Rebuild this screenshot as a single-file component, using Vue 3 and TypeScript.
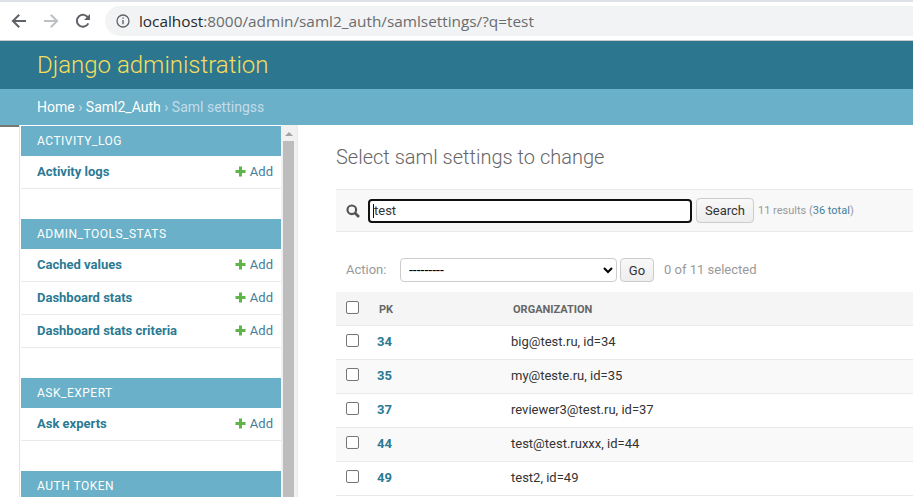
<script setup lang="ts">
interface Model { name: string }
interface Group { title: string; models: Model[] }
const groups: Group[] = [
  { title: 'ACTIVITY_LOG', models: [{ name: 'Activity logs' }] },
  { title: 'ADMIN_TOOLS_STATS', models: [{ name: 'Cached values' }, { name: 'Dashboard stats' }, { name: 'Dashboard stats criteria' }] },
  { title: 'ASK_EXPERT', models: [{ name: 'Ask experts' }] },
  { title: 'AUTH TOKEN', models: [] },
]
const rows = [
  { pk: 34, org: 'big@test.ru, id=34' },
  { pk: 35, org: 'my@teste.ru, id=35' },
  { pk: 37, org: 'reviewer3@test.ru, id=37' },
  { pk: 44, org: 'test@test.ruxxx, id=44' },
  { pk: 49, org: 'test2, id=49' },
]
</script>

<template>
  <div class="page">
    <div class="chrome">
      <div class="nav">
        <svg width="16" height="16" viewBox="0 0 16 16"><path d="M15 8H2.500M8.200 1.700 1.900 8l6.300 6.300" fill="none" stroke="#5f6368" stroke-width="2"/></svg>
        <svg width="16" height="16" viewBox="0 0 16 16"><path d="M1 8h12.500M7.800 1.700 14.100 8l-6.300 6.300" fill="none" stroke="#bdc1c6" stroke-width="2"/></svg>
        <svg width="16" height="16" viewBox="0 0 16 16"><path d="M13.300 10.300A6 6 0 1 1 13.200 5" fill="none" stroke="#5f6368" stroke-width="2"/><path d="M15 1v6H9z" fill="#5f6368"/></svg>
      </div>
      <div class="omni">
        <svg width="14" height="14" viewBox="0 0 14 14"><circle cx="7" cy="7" r="6" fill="none" stroke="#5f6368" stroke-width="1.300"/><path d="M7 6v4.300M7 3.500v1.300" stroke="#5f6368" stroke-width="1.400"/></svg>
        <span class="url"><b>localhost</b>:8000/admin/saml2_auth/samlsettings/?q=test</span>
      </div>
    </div>
    <header class="head"><span class="brand">Django administration</span></header>
    <div class="crumbs"><a>Home</a> › <a>Saml2_Auth</a> › Saml settingss</div>
    <div class="body">
      <div class="strip"></div>
      <aside class="side">
        <div class="side-list">
          <section v-for="g in groups" :key="g.title" class="grp">
            <div class="cap">{{ g.title }}</div>
            <div v-for="m in g.models" :key="m.name" class="mrow">
              <a class="mname">{{ m.name }}</a>
              <span class="add"><svg width="11" height="11" viewBox="0 0 11 11"><path d="M4 0.500h3v3.500h3.500v3H7v3.500H4V7H0.500V4H4z" fill="#5fb44a"/></svg>Add</span>
            </div>
          </section>
        </div>
        <div class="sbar"><div class="sup"></div><div class="thumb"></div></div>
      </aside>
      <main class="main">
        <h1>Select saml settings to change</h1>
        <div class="search">
          <svg class="lens" width="14" height="14" viewBox="0 0 14 14"><circle cx="5.800" cy="5.800" r="4.300" fill="none" stroke="#555" stroke-width="2.200"/><path d="M9 9l4 4" stroke="#555" stroke-width="2.600"/></svg>
          <div class="sinput"><span class="caret"></span>test</div>
          <button class="btn sbtn">Search</button>
          <span class="res">11 results (<a>36 total</a>)</span>
        </div>
        <div class="actions">
          <span class="alabel">Action:</span>
          <select class="asel"><option>---------</option></select>
          <button class="btn go">Go</button>
          <span class="acount">0 of 11 selected</span>
        </div>
        <div class="thead">
          <span class="cb-cell"><span class="cb"></span></span>
          <span class="pk">PK</span>
          <span class="org">ORGANIZATION</span>
        </div>
        <div v-for="(r, i) in rows" :key="r.pk" class="trow" :class="{ alt: i % 2 === 1 }">
          <span class="cb-cell"><span class="cb"></span></span>
          <a class="pk">{{ r.pk }}</a>
          <span class="org">{{ r.org }}</span>
        </div>
      </main>
    </div>
  </div>
</template>

<style>
html, body { margin: 0; overflow: hidden; background: #fff; }
</style>

<style scoped>
.page { width: 913px; height: 497px; overflow: hidden; font-family: Roboto, "Liberation Sans", sans-serif; color: #333; }
.chrome { height: 38px; border-top: 2px solid #dee1e6; border-bottom: 1px solid #c8cacc; display: flex; align-items: center; background: #fff; }
.nav { display: flex; gap: 16px; padding-left: 11px; width: 105px; box-sizing: border-box; align-items: center; }
.omni { flex: 1; height: 30px; background: #f1f3f4; border-radius: 15px 0 0 15px; display: flex; align-items: center; padding-left: 11px; gap: 9px; }
.url { font: 15.350px "Open Sans", sans-serif; color: #6a6d70; white-space: nowrap; }
.url b { font-weight: 400; color: #26282b; }
.head { height: 48px; background: #2c778f; display: flex; align-items: center; padding-left: 37px; }
.brand { font-size: 24px; font-weight: 300; color: #f5dd5d; }
.crumbs { height: 36px; line-height: 36px; background: #69b0c8; color: #c4dce8; padding-left: 37px; font-size: 14px; white-space: pre; }
.crumbs a { color: #fff; }
.body { display: flex; height: 372px; }
.strip { width: 19px; height: 2px; background: #777; flex: none; }
.side { width: 278px; box-sizing: border-box; display: flex; border-left: 1px solid #e4e4e4; padding-left: 1px; flex: none; }
.side-list { width: 260px; flex: none; padding-top: 1px; }
.grp { margin-bottom: 30px; }
.cap { height: 30px; background: #69b0c8; color: #fff; font-size: 12px; letter-spacing: .5px; padding-left: 16px; line-height: 30px; }
.mrow { height: 33px; box-sizing: border-box; border-bottom: 1px solid #eaeaea; display: flex; align-items: center; padding: 0 8px 2px 16px; font-size: 13px; justify-content: space-between; background: #fff; }
.mname { font-weight: 700; color: #2b7a94; }
.add { color: #447e9b; display: flex; align-items: center; gap: 4px; }
.sbar { width: 16px; flex: none; background: #f1f1f1; border-right: 1px solid #eaeaea; }
.sup { height: 16px; position: relative; }
.sup::after { content: ""; position: absolute; left: 4px; top: 7px; border: 4px solid transparent; border-top: 0; border-bottom: 4px solid #a3a3a3; }
.thumb { background: #bdbdbd; height: 360px; width: 11px; margin-left: 2px; }
.main { flex: 1; padding: 0 0 0 39px; min-width: 0; }
h1 { margin: 20px 0 0; font-size: 20px; font-weight: 300; color: #666; line-height: 24px; }
.search { margin-top: 20px; height: 41px; background: #f8f8f8; border-top: 1px solid #eaeaea; border-bottom: 1px solid #eaeaea; display: flex; align-items: center; padding-left: 10px; }
.lens { margin-right: 8px; }
.sinput { width: 324px; height: 24px; box-sizing: border-box; border: 2px solid #101010; border-radius: 4px; background: #fff; font-size: 13px; display: flex; align-items: center; padding-left: 3px; color: #333; margin-right: 4px; }
.caret { width: 1px; height: 14px; background: #111; }
.btn { font: 13px Roboto, sans-serif; color: #333; background: linear-gradient(#f8f8f8, #eee); border: 1px solid #ccc; border-radius: 4px; padding: 0; }
.sbtn { width: 58px; height: 25px; margin-right: 4px; }
.res { font-size: 11px; color: #999; }
.res a { color: #447e9b; }
.actions { height: 24px; margin-top: 26px; display: flex; align-items: center; padding-left: 10px; font-size: 13px; color: #999; }
.alabel { width: 54px; margin-bottom: 2px; }
.asel { width: 217px; height: 24px; border: 1px solid #ccc; border-radius: 4px; background: #fff; font: 14px Roboto, sans-serif; color: #000; padding: 0 4px; }
.go { width: 34px; height: 24px; margin-left: 3px; }
.acount { margin-left: 10px; margin-bottom: 2px; }
.thead { margin-top: 10px; height: 34px; box-sizing: border-box; padding-top: 2px; background: #f5f5f5; border-bottom: 1px solid #eaeaea; display: flex; align-items: center; font-size: 11px; font-weight: 700; color: #666; }
.trow { height: 34px; box-sizing: border-box; border-bottom: 1px solid #eaeaea; display: flex; align-items: center; font-size: 13px; padding-bottom: 2px; }
.alt { background: #f9f9f9; }
.cb-cell { width: 43px; padding-left: 10px; box-sizing: border-box; display: flex; }
.cb { width: 11px; height: 11px; border: 1px solid #767676; border-radius: 2px; background: #fff; }
.trow .cb { margin-top: -2px; }
.thead .cb { margin-top: -5px; }
.pk { width: 134px; }
a.pk { font-weight: 700; color: #2b7a94; margin-left: -2px; margin-right: 2px; }
.trow .org { margin-left: -2px; }
</style>
